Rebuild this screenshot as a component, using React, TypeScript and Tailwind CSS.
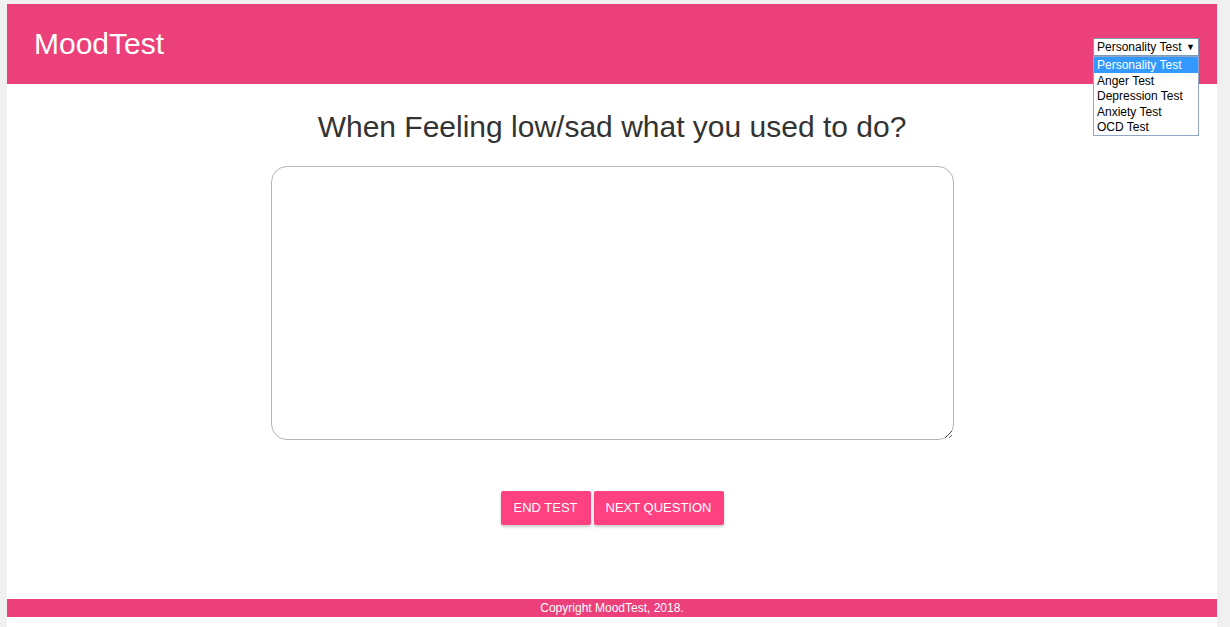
import { useState } from "react";

const tests = ["Personality Test", "Anger Test", "Depression Test", "Anxiety Test", "OCD Test"];

export default function App() {
    const [answer, setAnswer] = useState("");

    return (
        <div
            className="flex h-[627px] w-[1230px] flex-col overflow-hidden bg-[#f1f0f0] pl-[7px] pr-[13px] pt-[4px]"
            style={{ fontFamily: '"Liberation Sans", Arial, sans-serif' }}
        >
            <main className="flex flex-1 flex-col bg-white">
                <header className="relative flex h-[80px] items-center justify-between bg-[#ec407a] pl-[27px] pr-[18px]">
                    <h1 className="text-[30px] leading-none text-white">MoodTest</h1>
                    {/* open select list, drawn over the header edge */}
                    <div className="relative w-[106px] self-start pt-[34px] text-[12px] leading-none text-black">
                        <div className="flex h-[18px] items-center justify-between border border-[#7f9db9] bg-white px-[3px]">
                            <span>Personality Test</span>
                            <span className="text-[9px]">▼</span>
                        </div>
                        <ul className="absolute left-0 top-[52px] w-[106px] border border-[#8fa6c9] bg-white">
                            {tests.map((t, i) => (
                                <li
                                    key={t}
                                    className={
                                        i === 0
                                            ? "h-[15.6px] bg-[#3399ff] px-[3px] pt-[2px] text-white"
                                            : "h-[15.6px] px-[3px] pt-[2px]"
                                    }
                                >
                                    {t}
                                </li>
                            ))}
                        </ul>
                    </div>
                </header>

                <section className="flex flex-col items-center">
                    <h2 className="mt-[25px] h-[36px] text-[30px] leading-[36px] text-[#333]">
                        When Feeling low/sad what you used to do?
                    </h2>
                    <textarea
                        value={answer}
                        onChange={e => setAnswer(e.target.value)}
                        className="mt-[21px] h-[274px] w-[683px] resize rounded-[16px] border border-[#b5b5b5] p-3 outline-none"
                    />
                    <div className="mt-[51px] flex gap-[3px]">
                        <button className="h-[34px] w-[90px] rounded-[2px] bg-[#ff4081] text-[13px] uppercase text-white shadow-[0_2px_3px_rgba(0,0,0,0.2)]">
                            End Test
                        </button>
                        <button className="h-[34px] w-[130px] rounded-[2px] bg-[#ff4081] text-[13px] uppercase text-white shadow-[0_2px_3px_rgba(0,0,0,0.2)]">
                            Next Question
                        </button>
                    </div>
                </section>

                <footer className="mt-auto mb-[10px] flex h-[18px] items-center justify-center bg-[#ec407a] text-[12px] text-white">
                    Copyright MoodTest, 2018.
                </footer>
            </main>
        </div>
    );
}
